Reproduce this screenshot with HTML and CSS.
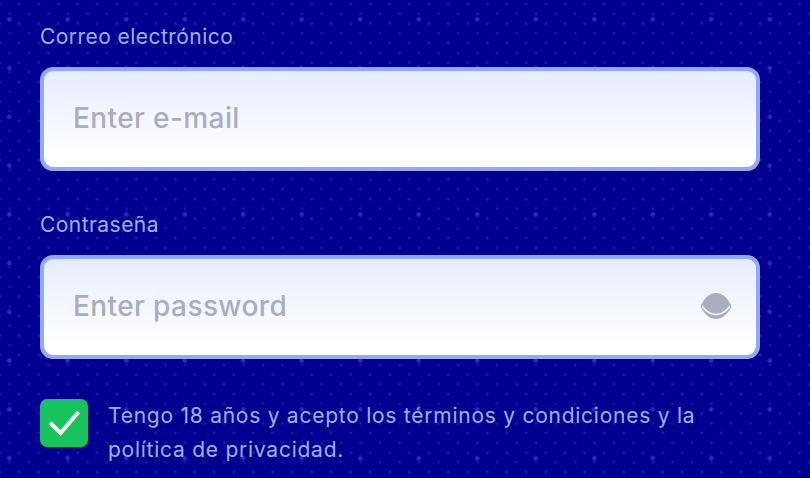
FILE: index.html
```html
<!DOCTYPE html>
<html lang="es">
<head>
    <meta charset="UTF-8">
    <meta name="viewport" content="width=device-width, initial-scale=1.0">
    <title>Registro</title>
    <link rel="stylesheet" href="styles.css">
</head>
<body>
    <form class="signup-form">
        <div class="form-group">
            <label class="field-label" for="email">Correo electrónico</label>
            <div class="field">
                <input class="field-input" type="text" id="email" placeholder="Enter e-mail">
            </div>
        </div>

        <div class="form-group">
            <label class="field-label" for="password">Contraseña</label>
            <div class="field">
                <input class="field-input" type="password" id="password" placeholder="Enter password">
                <svg class="eye-icon" width="32" height="28" viewBox="0 0 32 28" aria-hidden="true">
                    <path d="M0.500 14C5 5 10 1 16 1s11 4 15.500 13c-3.500 8-9 13-15.500 13S4 22 0.500 14z" fill="#a8adbf"/>
                    <path d="M2.500 14.500c4 5.500 8 8 13.500 8s9.500-2.500 13.500-8" fill="none" stroke="#f6f8ff" stroke-width="1.600" stroke-linecap="round"/>
                </svg>
            </div>
        </div>

        <div class="terms">
            <span class="checkbox">
                <svg width="32" height="26" viewBox="0 0 32 26" aria-hidden="true">
                    <path d="M2 12.500l10.500 10.500L30.500 2" fill="none" stroke="#ffffff" stroke-width="4"/>
                </svg>
            </span>
            <p class="terms-text">Tengo 18 años y acepto los términos y condiciones y la política de privacidad.</p>
        </div>
    </form>
</body>
</html>
```

FILE: styles.css
```css
html, body {
    height: 100%;
}
body {
    margin: 0;
    overflow: hidden;
    font-family: Inter, "Liberation Sans", sans-serif;
    background-color: #000090;
    background-image:
        radial-gradient(circle, rgba(70, 85, 230, 0.55) 1.8px, transparent 2.6px),
        radial-gradient(circle, rgba(70, 85, 230, 0.35) 1.1px, transparent 1.8px),
        radial-gradient(circle, rgba(70, 85, 230, 0.3) 1.1px, transparent 1.8px);
    background-size: 58.500px 48.750px, 19.500px 19.500px, 19.500px 19.500px;
    background-position: -20px -5px, 9.500px -5.700px, -0.200px 4px;
}
.signup-form {
    padding: 23px 50px 0 40px;
}
.form-group {
    margin-bottom: 40px;
}
.field-label {
    display: block;
    margin-bottom: 16px;
    font-size: 21px;
    line-height: 28px;
    letter-spacing: 0.45px;
    color: #9fb0fa;
}
.field {
    position: relative;
    height: 104px;
    box-sizing: border-box;
    border: 4px solid #93a7fb;
    border-radius: 13px;
    background: linear-gradient(#e6ecff, #ffffff 88%);
}
.field-input {
    display: block;
    width: 100%;
    height: 100%;
    box-sizing: border-box;
    padding: 0 29px 2px;
    border: none;
    outline: none;
    background: transparent;
    font-family: inherit;
    font-size: 28px;
    font-weight: 500;
    letter-spacing: 0.4px;
}
.field-input::placeholder {
    color: #a8adbf;
    opacity: 1;
}
.eye-icon {
    position: absolute;
    right: 24px;
    top: 33px;
}
.terms {
    display: flex;
    gap: 20px;
}
.checkbox {
    display: flex;
    flex: none;
    align-items: center;
    justify-content: center;
    width: 48px;
    height: 48px;
    border-radius: 7px;
    background-color: #17c45c;
}
.terms-text {
    margin: 0;
    font-size: 21px;
    line-height: 34px;
    letter-spacing: 0.75px;
    color: #9fb0fa;
}
```
